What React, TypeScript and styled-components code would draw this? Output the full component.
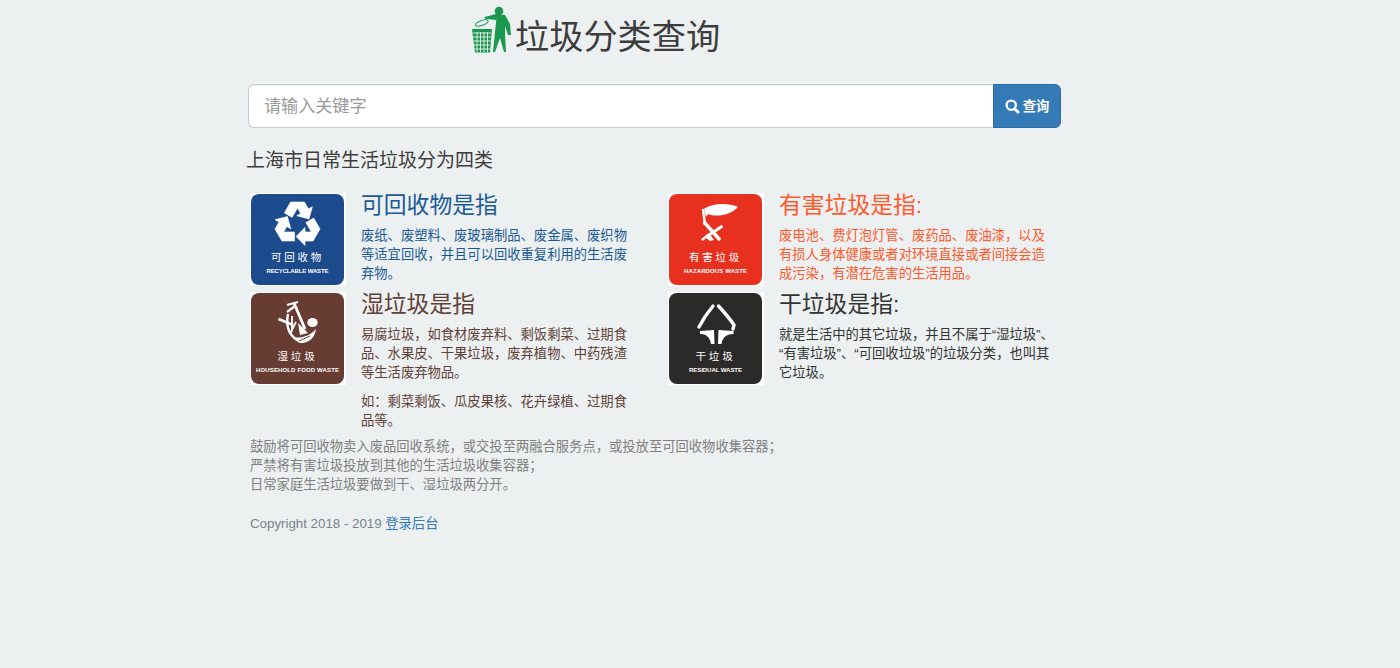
import React from "react";
import styled, { createGlobalStyle } from "styled-components";

const GlobalStyle = createGlobalStyle`
  html, body {
    margin: 0;
    padding: 0;
    background: #ecf0f1;
  }
  body {
    font-family: "Liberation Sans", "Noto Sans CJK SC", sans-serif;
    font-size: 13.3px;
    line-height: 19px;
    color: #333333;
  }
`;

const Page = styled.div`
  min-height: 668px;
  box-sizing: border-box;
  padding-left: 248px;
  width: 1061px;
`;

const Header = styled.header`
  display: flex;
  align-items: flex-start;
  padding: 4px 0 0 224px;
  height: 84px;
  box-sizing: border-box;
`;

const Logo = styled.svg`
  width: 42px;
  height: 50px;
  flex: none;
`;

const Title = styled.h1`
  margin: 8px 0 0 1px;
  font-size: 34.2px;
  line-height: 50px;
  font-weight: 400;
  color: #3d3d3d;
`;

const SearchBar = styled.form`
  display: flex;
  height: 44px;
  margin: 0;
`;

const SearchInput = styled.input`
  flex: 1;
  min-width: 0;
  box-sizing: border-box;
  padding: 0 15px;
  border: 1px solid #cccccc;
  border-right: 0;
  border-radius: 6px 0 0 6px;
  background: #ffffff;
  font: inherit;
  font-size: 17.1px;
  box-shadow: inset 0 1px 1px rgba(0, 0, 0, 0.075);
  outline: none;

  &::placeholder {
    color: #999999;
    opacity: 1;
  }
`;

const SearchButton = styled.button`
  width: 68px;
  display: flex;
  align-items: center;
  justify-content: center;
  gap: 3px;
  border: 1px solid #2e6da4;
  border-radius: 0 6px 6px 0;
  background: #337ab7;
  color: #ffffff;
  font: inherit;
  font-weight: 700;
  padding: 0;
`;

const SearchIcon = styled.svg`
  width: 15px;
  height: 15px;
`;

const Lead = styled.h3`
  margin: 20px 0 0 -2px;
  font-size: 19px;
  line-height: 26px;
  font-weight: 400;
  color: #3d3d3d;
`;

const Cards = styled.div`
  display: grid;
  grid-template-columns: 418px 1fr;
  margin-top: 19px;
`;

const Card = styled.section<{ $color: string }>`
  display: flex;
  align-items: flex-start;
  padding-left: 2px;
  color: ${(p) => p.$color};
  min-height: 99px;
`;

const Badge = styled.svg`
  flex: none;
  width: 96px;
  height: 93px;
  background: #ffffff;
  margin-right: 15px;
`;

const CardBody = styled.div`
  width: 279px;
`;

const CardTitle = styled.h2`
  margin: 0 0 9px;
  font-size: 22.8px;
  line-height: 24px;
  font-weight: 400;
`;

const CardText = styled.p`
  margin: 0 0 9px;

  & + & {
    margin-top: 10px;
  }
  &:last-child {
    margin-bottom: 7px;
  }
`;

const Notes = styled.p`
  margin: 0 0 0 2px;
  color: #808080;
`;

const Footer = styled.footer`
  margin: 20px 0 0 2px;
  color: #77838a;
`;

const FooterLink = styled.a`
  color: #337ab7;
  text-decoration: none;
`;

const BADGE_CN = { fontSize: 10.5, fill: "#fff", textAnchor: "middle" as const, fontFamily: "'Noto Sans CJK SC', sans-serif" };
const BADGE_EN = { fontSize: 6, fontWeight: 700, fill: "#fff", textAnchor: "middle" as const, fontFamily: "'Liberation Sans', sans-serif" };

const BadgeFrame = ({ bg, cn, en, enWidth, children }: any) => (
  <Badge viewBox="0 0 96 93">
    <rect x="1" y="1" width="93" height="91" rx="8" fill={bg} />
    {children}
    <text x="47.5" y="68" letterSpacing="2.8" {...BADGE_CN}>{cn}</text>
    <text x="47.5" y="80" textLength={enWidth} {...BADGE_EN}>{en}</text>
  </Badge>
);

const RECYCLE_ARM = "M-13.2 -11.1 L-6.9 -22 L6.9 -22 L10.95 -15 L14.85 -17.25 L11.5 -5 L-0.75 -8.25 L3.18 -10.5 L0 -16 L-5.4 -6.6 Z";

const RecycleMark = () => (
  <g transform="translate(47.5 31)" fill="#fff" stroke="#fff" strokeWidth="0.6" strokeLinejoin="round">
    <path d={RECYCLE_ARM} />
    <path d={RECYCLE_ARM} transform="rotate(120)" />
    <path d={RECYCLE_ARM} transform="rotate(240)" />
  </g>
);

const HazardMark = () => (
  <g>
    <path d="M36 16 C44 11 58 9 70 14 C64 21 50 25 40 21 L38 24 Z" fill="#fff" />
    <path d="M35 16 L37 32" stroke="#fff" strokeWidth="2.4" fill="none" />
    <path d="M36 29 L52 47" stroke="#fff" strokeWidth="3.4" fill="none" />
    <path d="M54.5 33 L38 44" stroke="#fff" strokeWidth="3" fill="none" />
    <path d="M33 46 L41 40 L46 47 L42 48 L38 45 L35 48 Z" fill="#fff" />
  </g>
);

const FoodMark = () => (
  <g fill="none" stroke="#fff" strokeWidth="2.2">
    <path d="M37 13 L48 10" />
    <path d="M44 11 L55 37" strokeWidth="2.8" />
    <path d="M37 20 L45 14" />
    <path d="M38 22 C36 32 38 42 47 48" strokeWidth="2.4" />
    <path d="M28.5 27 L43 33" strokeWidth="2.6" />
    <path d="M42 24 L42 38 M46 30 L40 42" strokeWidth="1.8" />
    <path d="M48 31 L58 41 L50 43 Z" fill="#fff" stroke="none" />
    <ellipse cx="62.5" cy="30.5" rx="5.2" ry="4.6" fill="#fff" stroke="none" />
    <path d="M44 45 C50 47 60 44 66 37 C65 46 58 52 50 51 C47 50 45 48 44 45 Z" fill="#fff" stroke="none" />
    <path d="M49 49 L60 44" stroke="#673c32" strokeWidth="1" />
  </g>
);

const ResidualMark = () => (
  <g fill="#fff">
    <path d="M45 14 C40 20 35 27 31 35" fill="none" stroke="#fff" strokeWidth="3.4" strokeLinecap="round" />
    <path d="M50.5 14 C56 20 62 27 66 33 L65 37" fill="none" stroke="#fff" strokeWidth="3.4" strokeLinecap="round" />
    <path d="M32 39 L46 38 L46.5 52 L43 52 C42 45 38 42 32 42 Z" />
    <path d="M65.5 39 L50.5 38 L50 52 L53.5 52 C54.5 45 59 42 65.5 42 Z" />
  </g>
);

const App = () => (
  <Page>
    <GlobalStyle />
    <Header>
      <Logo viewBox="0 0 42 50">
        <circle cx="27" cy="7" r="4.3" fill="#1a9850" />
        <path d="M12.7 13 L24 10 L33 11 L38 20 L39 31 L36 31 L33 22 L33 30 L34 48 L32 48 L28 34 L23 48 L21 48 L22.7 31 L24.3 16 L12.7 14.7 Z" fill="#1a9850" />
        <ellipse cx="9.8" cy="19" rx="6.6" ry="2.4" transform="rotate(-20 9.8 19)" fill="none" stroke="#1a9850" strokeWidth="1" />
        <path d="M0 25 H20 L18 48.5 H3 Z" fill="#1a9850" />
        <path d="M1 29 H19 M1 33 H19 M1.5 37 H19 M2 41 H18 M2.5 45 H18 M5 28 V48 M8.5 28 V48 M12 28 V48 M15.5 28 V48" stroke="#ecf0f1" strokeWidth="0.9" />
      </Logo>
      <Title>垃圾分类查询</Title>
    </Header>

    <SearchBar onSubmit={(e) => e.preventDefault()}>
      <SearchInput placeholder="请输入关键字" />
      <SearchButton type="submit">
        <SearchIcon viewBox="0 0 14 14">
          <circle cx="5.8" cy="5.8" r="4.3" fill="none" stroke="#fff" strokeWidth="2.2" />
          <path d="M9 9 L13 13" stroke="#fff" strokeWidth="2.6" />
        </SearchIcon>
        查询
      </SearchButton>
    </SearchBar>

    <Lead>上海市日常生活垃圾分为四类</Lead>

    <Cards>
      <Card $color="#1b5a96">
        <BadgeFrame bg="#1b4b8c" cn="可回收物" en="RECYCLABLE WASTE" enWidth={62}>
          <RecycleMark />
        </BadgeFrame>
        <CardBody>
          <CardTitle>可回收物是指</CardTitle>
          <CardText>废纸、废塑料、废玻璃制品、废金属、废织物等适宜回收，并且可以回收重复利用的生活废弃物。</CardText>
        </CardBody>
      </Card>
      <Card $color="#ff5a2c">
        <BadgeFrame bg="#e8301f" cn="有害垃圾" en="HAZARDOUS WASTE" enWidth={63}>
          <HazardMark />
        </BadgeFrame>
        <CardBody>
          <CardTitle>有害垃圾是指:</CardTitle>
          <CardText>废电池、费灯泡灯管、废药品、废油漆，以及有损人身体健康或者对环境直接或者间接会造成污染，有潜在危害的生活用品。</CardText>
        </CardBody>
      </Card>
      <Card $color="#5f4037">
        <BadgeFrame bg="#673c32" cn="湿垃圾" en="HOUSEHOLD FOOD WASTE" enWidth={83}>
          <FoodMark />
        </BadgeFrame>
        <CardBody>
          <CardTitle>湿垃圾是指</CardTitle>
          <CardText>易腐垃圾，如食材废弃料、剩饭剩菜、过期食品、水果皮、干果垃圾，废弃植物、中药残渣等生活废弃物品。</CardText>
          <CardText>如：剩菜剩饭、瓜皮果核、花卉绿植、过期食品等。</CardText>
        </CardBody>
      </Card>
      <Card $color="#333333">
        <BadgeFrame bg="#2c2a28" cn="干垃圾" en="RESIDUAL WASTE" enWidth={53}>
          <ResidualMark />
        </BadgeFrame>
        <CardBody>
          <CardTitle>干垃圾是指:</CardTitle>
          <CardText>就是生活中的其它垃圾，并且不属于“湿垃圾”、<br />“有害垃圾”、“可回收垃圾”的垃圾分类，也叫其它垃圾。</CardText>
        </CardBody>
      </Card>
    </Cards>

    <Notes>
      鼓励将可回收物卖入废品回收系统，或交投至两融合服务点，或投放至可回收物收集容器；
      <br />
      严禁将有害垃圾投放到其他的生活垃圾收集容器；
      <br />
      日常家庭生活垃圾要做到干、湿垃圾两分开。
    </Notes>

    <Footer>
      Copyright 2018 - 2019 <FooterLink href="#">登录后台</FooterLink>
    </Footer>
  </Page>
);

export default App;
